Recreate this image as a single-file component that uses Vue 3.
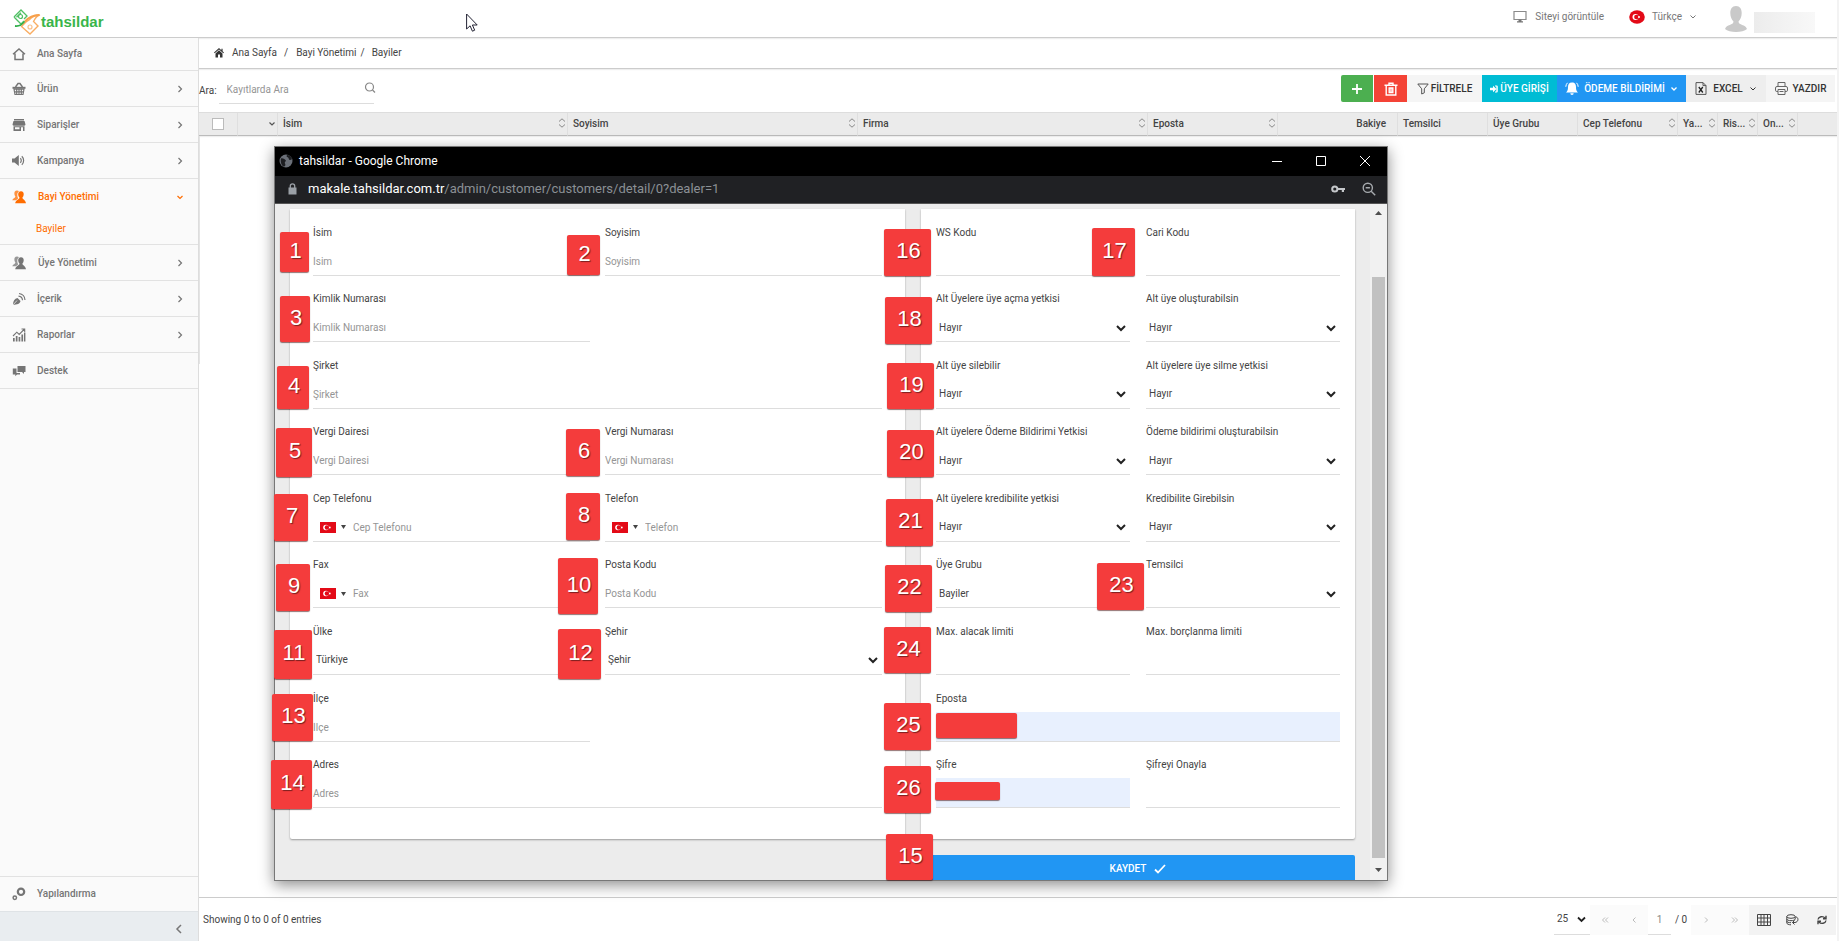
<script setup>
const menu = [
  { label: 'Ana Sayfa', icon: 'home' },
  { label: 'Ürün', icon: 'basket', arrow: true },
  { label: 'Siparişler', icon: 'store', arrow: true },
  { label: 'Kampanya', icon: 'sound', arrow: true },
  { label: 'Bayi Yönetimi', icon: 'users', arrow: true, active: true, child: 'Bayiler' },
  { label: 'Üye Yönetimi', icon: 'users', arrow: true, wide: true },
  { label: 'İçerik', icon: 'feed', arrow: true },
  { label: 'Raporlar', icon: 'chart', arrow: true },
  { label: 'Destek', icon: 'chat' }
]

const icons = {
  home: '<path d="M1 7.2 7 2l6 5.2M3 6.500v6h8v-6" fill="none" stroke="currentColor" stroke-width="1.5"/>',
  basket: '<path d="M.5 4.800h13v2H.5z"/><path d="M3.500 5 6 1.500h2L10.500 5" fill="none" stroke="currentColor" stroke-width="1.400"/><path d="M2 7.200h10l-1 5.300H3zM4.700 7v5.500M7 7v5.500M9.300 7v5.500M2.500 9.800h9" fill="none" stroke="currentColor" stroke-width="1.200"/>',
  store: '<path d="M2 1h10v1.500H2zM1.500 3h11l1 3.500a1.500 1.500 0 0 1-1.500 1.200H2A1.500 1.500 0 0 1 .5 6.500z"/><path fill-rule="evenodd" d="M1.500 8.200h11V13h-11zM3 9.200v2h4.500v-2zM9 9.200V13h2V9.200z"/>',
  sound: '<path d="M0 4.500h2.500L6.800 1v11L2.500 8.500H0z"/><path d="M8.300 4.200a3.200 3.200 0 0 1 0 4.600M9.800 2.200a6 6 0 0 1 0 8.600" fill="none" stroke="currentColor" stroke-width="1.200"/>',
  users: '<path d="M5 0.500C3 .5 2.200 2 2.400 4c.1 1.300.6 2 1 2.600C3.300 8 .8 8.300.3 10.300h4C5 9 6 8.800 6.200 8.200 5 6 4.800 2.800 7 1.200 6.500.7 5.800.5 5 .5z" opacity=".75"/><path d="M9 1.200c-2 0-2.900 1.500-2.800 3.300.1 1.500.8 2.500 1.300 3.200.1 1.700-4 2-4.300 5.600h10.800c-.3-3.600-3.700-3.900-3.600-5.600.5-.7 1.200-1.700 1.300-3.200C11.900 2.700 11 1.200 9 1.200z"/>',
  feed: '<path d="M1 13c0-4 1.500-6.500 4.500-7l3 3C8 12 5 12.500 1 13z"/><path d="M1 13l4-4.500" stroke="#fafafa" stroke-width=".7"/><path d="M6.500 4.200a4.300 4.300 0 0 1 4 4M7 1.500a7 7 0 0 1 6 6.500" fill="none" stroke="currentColor" stroke-width="1.200"/>',
  chart: '<path d="M1 10h1.700v3.500H1zM3.800 8h1.700v5.500H3.800zM6.600 9h1.700v4.500H6.600zM9.400 6.500h1.700v7H9.400zM12 4.500h1.400v9H12z"/><path d="M1 8l3.800-3.800 2.400 2.300L12.500 1M9.500 1h3.200v3" fill="none" stroke="currentColor" stroke-width="1.100"/>',
  chat: '<path d="M5.500 2h8v6h-1.500v2L10 8H5.500z"/><path d="M.8 4.500h3.700V9H8v1.500H5L3.300 12.300v-1.800H.8z"/>',
  gear: '<circle cx="9" cy="4.800" r="3.200" fill="none" stroke="currentColor" stroke-width="2.200"/><circle cx="2.800" cy="10.800" r="1.700" fill="none" stroke="currentColor" stroke-width="1.500"/>'
}

const left = [
  [{ label: 'İsim', ph: 'İsim' }, { label: 'Soyisim', ph: 'Soyisim' }],
  [{ label: 'Kimlik Numarası', ph: 'Kimlik Numarası' }],
  [{ label: 'Şirket', ph: 'Şirket', full: true }],
  [{ label: 'Vergi Dairesi', ph: 'Vergi Dairesi' }, { label: 'Vergi Numarası', ph: 'Vergi Numarası' }],
  [{ label: 'Cep Telefonu', ph: 'Cep Telefonu', flag: true }, { label: 'Telefon', ph: 'Telefon', flag: true }],
  [{ label: 'Fax', ph: 'Fax', flag: true }, { label: 'Posta Kodu', ph: 'Posta Kodu' }],
  [{ label: 'Ülke', value: 'Türkiye' }, { label: 'Şehir', value: 'Şehir' }],
  [{ label: 'İlçe', ph: 'İlçe' }],
  [{ label: 'Adres', ph: 'Adres', full: true }]
]
const right = [
  [{ label: 'WS Kodu' }, { label: 'Cari Kodu' }],
  [{ label: 'Alt Üyelere üye açma yetkisi', value: 'Hayır' }, { label: 'Alt üye oluşturabilsin', value: 'Hayır' }],
  [{ label: 'Alt üye silebilir', value: 'Hayır' }, { label: 'Alt üyelere üye silme yetkisi', value: 'Hayır' }],
  [{ label: 'Alt üyelere Ödeme Bildirimi Yetkisi', value: 'Hayır' }, { label: 'Ödeme bildirimi oluşturabilsin', value: 'Hayır' }],
  [{ label: 'Alt üyelere kredibilite yetkisi', value: 'Hayır' }, { label: 'Kredibilite Girebilsin', value: 'Hayır' }],
  [{ label: 'Üye Grubu', value: 'Bayiler' }, { label: 'Temsilci', value: ' ' }],
  [{ label: 'Max. alacak limiti' }, { label: 'Max. borçlanma limiti' }],
  [{ label: 'Eposta', full: true, filled: true }],
  [{ label: 'Şifre', filled: true }, { label: 'Şifreyi Onayla' }]
]
const cards = [
  { id: 'l', rows: left },
  { id: 'r', rows: right }
]

const columns = [
  { label: 'İsim', sort: true, cls: 'w-auto' },
  { label: 'Soyisim', sort: true, cls: 'w-auto' },
  { label: 'Firma', sort: true, cls: 'w-auto' },
  { label: 'Eposta', sort: true, cls: 'w-130' },
  { label: 'Bakiye', cls: 'w-120 end' },
  { label: 'Temsilci', cls: 'w-90' },
  { label: 'Üye Grubu', cls: 'w-90' },
  { label: 'Cep Telefonu', sort: true, cls: 'w-100' },
  { label: 'Ya...', sort: true, cls: 'w-40' },
  { label: 'Ris...', sort: true, cls: 'w-40' },
  { label: 'On...', sort: true, cls: 'w-40' }
]

// [text, x, y, width, height] on the window's canvas
const pins = [
  ['1', 6, 86, 29, 40], ['2', 293, 89, 33, 40], ['3', 6, 150, 30, 46], ['4', 3, 220, 32, 43],
  ['5', 2, 282, 36, 49], ['6', 292, 283, 34, 47], ['7', 0, 348, 34, 47], ['8', 292, 347, 34, 47],
  ['9', 2, 418, 34, 47], ['10', 284, 412, 40, 56], ['11', 0, 484, 38, 49], ['12', 284, 483, 43, 50],
  ['13', -2, 548, 41, 47], ['14', -3, 614, 41, 49], ['16', 610, 83, 47, 47], ['17', 818, 82, 43, 48],
  ['18', 611, 151, 47, 47], ['19', 613, 217, 47, 46], ['20', 613, 284, 47, 47], ['21', 612, 353, 47, 47],
  ['22', 611, 419, 47, 47], ['23', 823, 417, 47, 47], ['24', 610, 481, 47, 46], ['25', 610, 557, 47, 47],
  ['26', 610, 620, 47, 47], ['15', 612, 688, 47, 46], ['', 662, 567, 81, 25], ['', 661, 636, 65, 18]
].map(([text, x, y, w, h]) => ({
  text,
  box: { left: x + 'px', top: y + 'px', width: w + 'px', height: h + 'px' }
}))
</script>

<template>
  <div class="app">
    <header class="top">
      <a href="#" class="logo">
        <svg width="29" height="26" viewBox="0 0 29 26" fill="none">
          <path d="M2 8 9 1l6 6-3 3M2 8l7 7 3-3M4.500 8.200 9 3.700M15 7l-2.500 2.500" stroke="#4fbf63" stroke-width="1.300" />
          <circle cx="8.500" cy="7.500" r="2" stroke="#4fbf63" stroke-width="1.200" />
          <path d="M3 17c4 .5 7-1 10-4.500" stroke="#2fae49" stroke-width="1.800" />
          <path d="M9.500 17.500 14 13l3-2c3-3.500 6-5 11-5-4 1-5 4-6.500 6.500L26 17l-8 8z" stroke="#f9ad62" stroke-width="1.400" />
          <path d="M13 12.500C17 8 21 6 27 6" stroke="#f7a04b" stroke-width="2" />
          <circle cx="18" cy="18" r="2" stroke="#f9c08a" stroke-width="1.200" />
        </svg>
        <span>tahsildar</span>
      </a>
      <nav class="top-nav">
        <a href="#" class="site">
          <svg width="14" height="14" viewBox="0 0 14 14"><path d="M1 1.500h12v8H1z" fill="none" stroke="#8a8a8a" stroke-width="1.200" /><path d="M5.500 9.500h3v2h-3zM4 11.300h6v1.200H4z" fill="#777" /></svg>
          Siteyi görüntüle
        </a>
        <button type="button" class="lang">
          <svg width="16" height="14" viewBox="0 0 16 14"><ellipse cx="8" cy="7" rx="7.800" ry="6.800" fill="#e30a17" /><circle cx="6.500" cy="7" r="3" fill="#fff" /><circle cx="7.400" cy="7" r="2.300" fill="#e30a17" /><circle cx="10" cy="7" r="1" fill="#fff" /></svg>
          Türkçe
          <svg class="caret" width="8" height="8" viewBox="0 0 8 8"><path d="M1.500 2.500 4 5l2.500-2.500" fill="none" stroke="currentColor" /></svg>
        </button>
        <a href="#" class="user" aria-label="Profil">
          <svg width="22" height="26" viewBox="0 0 22 26" fill="#c9c9c9"><path d="M11 0c4 0 5.700 3 5.700 7 0 4-1.500 6.500-3.200 8.500 0 4 7 2.500 8.500 7.500-4 4-18 4-22 0 1.500-5 8.500-3.500 8.500-7.500C6.800 13.500 5.300 11 5.300 7c0-4 1.700-7 5.700-7z" /></svg>
          <span class="masked"></span>
        </a>
      </nav>
    </header>

    <div class="body">
      <aside class="side">
        <ul class="menu">
          <li v-for="m in menu" :key="m.label" :class="{ active: m.active }">
            <a href="#" class="item">
              <svg width="14" height="14" viewBox="0 0 14 14" fill="currentColor" v-html="icons[m.icon]"></svg>
              <span :class="{ shift: m.active || m.wide }">{{ m.label }}</span>
              <svg v-if="m.arrow" class="arrow" width="8" height="8" viewBox="0 0 8 8" fill="none" stroke="currentColor" stroke-width="1.200">
                <path :d="m.active ? 'M1.500 3 4 5.500 6.500 3' : 'M2.500 1 5.500 4l-3 3'" />
              </svg>
            </a>
            <a v-if="m.child" href="#" class="child">{{ m.child }}</a>
          </li>
        </ul>
        <div class="side-foot">
          <a href="#" class="item conf">
            <svg width="14" height="14" viewBox="0 0 14 14" fill="currentColor" v-html="icons.gear"></svg>
            <span>Yapılandırma</span>
          </a>
          <button type="button" class="collapse" aria-label="Menüyü daralt">
            <svg width="8" height="10" viewBox="0 0 8 10"><path d="M6 1 2 5l4 4" fill="none" stroke="#777" stroke-width="1.500" /></svg>
          </button>
        </div>
      </aside>

      <main class="main">
        <nav class="crumbs">
          <svg width="10" height="10" viewBox="0 0 10 10" fill="#333"><path d="M5 0 0 4.600l.7.700L5 1.500l4.300 3.800.7-.7L8.600 3.300V.8H7.400v1.400z" /><path d="M1.500 5.400 5 2.300l3.500 3.100V9.500H6V6.500H4v3H1.500z" /></svg>
          <a href="#">Ana Sayfa</a><i>/</i><a href="#">Bayi Yönetimi</a><i class="tight">/</i><a href="#">Bayiler</a>
        </nav>

        <div class="tools">
          <label for="search">Ara:</label>
          <div class="search">
            <input id="search" type="text" placeholder="Kayıtlarda Ara" />
            <svg width="12" height="12" viewBox="0 0 12 12" fill="none" stroke="#888" stroke-width="1.200"><circle cx="5.500" cy="5" r="4" /><path d="m8.500 8 2.500 2.500" /></svg>
          </div>
          <div class="buttons">
            <button type="button" class="b add" aria-label="Ekle"><svg width="10" height="10" viewBox="0 0 10 10"><path d="M5 0v10M0 5h10" stroke="#fff" stroke-width="1.800" /></svg></button>
            <button type="button" class="b del" aria-label="Sil"><svg width="14" height="14" viewBox="0 0 14 14" fill="none" stroke="#fff" stroke-width="1.400"><path d="M.5 3.300h13M5 3V1.200h4V3M2.200 3.500V13h9.600V3.500M5.200 6v4.500h3.600V6zM7 6v4.500" /></svg></button>
            <button type="button" class="b light filter"><svg width="12" height="12" viewBox="0 0 12 12" fill="none" stroke="#555"><path d="M.8 1h10.400L7.300 5.800v4L4.700 11V5.800z" /></svg>FİLTRELE</button>
            <button type="button" class="b login"><svg width="8" height="8" viewBox="0 0 8 8" fill="#fff"><path d="M0 2.700h3V.7L6.500 4 3 7.300v-2H0z" /><path d="M5 .5h1.500A1.200 1.200 0 0 1 7.800 1.700v4.600A1.200 1.200 0 0 1 6.500 7.500H5v-1h1.300V1.500H5z" /></svg>ÜYE GİRİŞİ</button>
            <button type="button" class="b notify"><svg width="14" height="14" viewBox="0 0 14 14" fill="#fff"><path d="M7 .5c3 0 4 2 4 4.500 0 3 .5 4 2 5.500H1C2.500 9 3 8 3 5 3 2.500 4 .5 7 .5zM5.300 11.300h3.400a1.700 1.700 0 0 1-3.400 0z" /><path d="M2.500.8A6 6 0 0 0 .8 4.800M11.500.8a6 6 0 0 1 1.700 4" fill="none" stroke="#fff" /></svg>ÖDEME BİLDİRİMİ<svg class="caret" width="8" height="8" viewBox="0 0 8 8"><path d="M1.500 2.500 4 5l2.500-2.500" fill="none" stroke="currentColor" stroke-width="1.300" /></svg></button>
            <button type="button" class="b excel"><svg width="12" height="13" viewBox="0 0 12 13" fill="none" stroke="#555"><path d="M1 .6h7l3 3v8.800H1zM8 .6v3h3" /><path d="m3.800 5 4 5.500M7.800 5l-4 5.500" stroke="#222" stroke-width="1.300" /></svg>EXCEL<svg class="caret" width="8" height="8" viewBox="0 0 8 8"><path d="M1.500 2.500 4 5l2.500-2.500" fill="none" stroke="currentColor" /></svg></button>
            <button type="button" class="b light print"><svg width="13" height="13" viewBox="0 0 13 13" fill="none" stroke="#666"><path d="M3 4.500v-4h7v4M3 9.500H1.800A1.300 1.300 0 0 1 .5 8.200V6A1.500 1.500 0 0 1 2 4.500h9A1.500 1.500 0 0 1 12.500 6v2.200a1.300 1.300 0 0 1-1.300 1.300H10M3 7.500h7v5H3zM4.500 9.500h4" /></svg>YAZDIR</button>
          </div>
        </div>

        <table class="grid">
          <thead>
            <tr>
              <th class="w-39 check"><input type="checkbox" aria-label="Tümünü seç" /></th>
              <th class="w-40 open"><svg width="8" height="8" viewBox="0 0 8 8"><path d="M1.500 2.500 4 5l2.500-2.500" fill="none" stroke="#555" stroke-width="1.200" /></svg></th>
              <th v-for="c in columns" :key="c.label" :class="c.cls">
                <div class="cell">
                  <span>{{ c.label }}</span>
                  <svg v-if="c.sort" width="8" height="10" viewBox="0 0 8 10" fill="none" stroke="#888"><path d="M1 3.500 4 .8l3 2.700M1 6.500l3 2.700 3-2.700" /></svg>
                </div>
              </th>
              <th class="w-39 last"></th>
            </tr>
          </thead>
        </table>
        <div class="rows"><div class="rail"></div></div>

        <footer class="foot">
          <span class="count">Showing 0 to 0 of 0 entries</span>
          <div class="size">
            <select aria-label="Sayfa boyutu"><option>25</option></select>
            <svg width="9" height="9" viewBox="0 0 9 9"><path d="m1 2.500 3.500 3.500L8 2.500" fill="none" stroke="#222" stroke-width="1.800" /></svg>
          </div>
          <div class="pg">
            <button type="button" aria-label="İlk"><svg width="8" height="8" viewBox="0 0 8 8"><path d="M4 1.500 1.500 4 4 6.500M7 1.500 4.500 4 7 6.500" /></svg></button>
            <button type="button" aria-label="Önceki"><svg width="8" height="8" viewBox="0 0 8 8"><path d="M5.500 1.500 3 4l2.500 2.500" /></svg></button>
          </div>
          <input class="page" type="text" value="1" aria-label="Sayfa" />
          <span class="of">/ 0</span>
          <div class="pg">
            <button type="button" aria-label="Sonraki"><svg width="8" height="8" viewBox="0 0 8 8"><path d="M3 1.500 5.500 4 3 6.500" /></svg></button>
            <button type="button" aria-label="Son"><svg width="8" height="8" viewBox="0 0 8 8"><path d="M1 1.500 3.500 4 1 6.500M4 1.500 6.500 4 4 6.500" /></svg></button>
          </div>
          <div class="pg solid">
            <button type="button" aria-label="Tablo"><svg width="14" height="12" viewBox="0 0 14 12"><path d="M.5.500h13v11H.5zM.5 4h13M.5 8h13M4 .5v11M7 .5v11M10.500.500v11" /></svg></button>
            <button type="button" aria-label="Veri"><svg width="13" height="12" viewBox="0 0 13 12"><ellipse cx="5" cy="2.500" rx="4.200" ry="1.800" /><path d="M.8 2.500v6.500c0 1 2 1.800 4.200 1.800M.8 5c0 1 2 1.700 4.200 1.700S9.200 6 9.200 5V2.500M.8 7.200c0 1 2 1.500 4.200 1.500M10 3c2.500 0 3 5-1 5.500H6.500M8.500 6.500l-2 2 2 2" /></svg></button>
            <button type="button" aria-label="Yenile"><svg width="10" height="10" viewBox="0 0 10 10" stroke-width="1.400"><path d="M1 4.500C1.500 1.500 6 .5 8 3.200M9 5.500c-.5 3-5 4-7 1.300M9 .8v2.900H6M1 9.200V6.300h3" /></svg></button>
          </div>
        </footer>
      </main>
    </div>

    <svg class="cursor" width="12" height="20" viewBox="0 0 12 20"><path d="M.6 1v15l3.500-3.200 2.300 5.400 2.300-1-2.300-5.200h4.800z" fill="#fff" stroke="#223" /></svg>

    <section class="win">
      <div class="title">
        <svg width="14" height="14" viewBox="0 0 14 14"><circle cx="7" cy="7" r="6.500" fill="#6b7078" /><path d="M2 4.500c2-.5 3 .5 4.500 1.500S5 8 6 9.500 6 13 4.500 12.500 1 8 2 4.500zM8 1c-1 1.500 0 2 1 2.500s.5 2.500 2 2.500 2-1 2-1C12.500 2.500 10.500 1 8 1z" fill="#1c1d20" /></svg>
        <span>tahsildar - Google Chrome</span>
        <div class="ctl">
          <button type="button" aria-label="Küçült"><svg width="10" height="10" viewBox="0 0 10 10"><path d="M0 5.500h10" /></svg></button>
          <button type="button" aria-label="Büyüt"><svg width="10" height="10" viewBox="0 0 10 10"><path d="M.5.500h9v9h-9z" /></svg></button>
          <button type="button" aria-label="Kapat"><svg width="10" height="10" viewBox="0 0 10 10"><path d="m0 0 10 10M10 0 0 10" /></svg></button>
        </div>
      </div>
      <div class="addr">
        <svg width="9" height="12" viewBox="0 0 9 12"><path d="M.5 4.500h8v7h-8z" fill="#9aa0a6" /><path d="M2.300 5V3a2.200 2.200 0 0 1 4.400 0v2" fill="none" stroke="#9aa0a6" stroke-width="1.300" /></svg>
        <span class="url"><b>makale.tahsildar.com.tr</b>/admin/customer/customers/detail/0?dealer=1</span>
        <svg width="14" height="8" viewBox="0 0 14 8"><circle cx="3.800" cy="4" r="2.600" fill="none" stroke="#c4c7ca" stroke-width="2" /><path d="M6.500 3H14v2h-1v2h-2.200V5H6.500z" fill="#c4c7ca" /></svg>
        <svg width="14" height="14" viewBox="0 0 14 14" fill="none" stroke="#a6aaae" stroke-width="1.400"><circle cx="5.800" cy="5.800" r="4.600" /><path d="m9.200 9.200 4 4M3.700 5.800h4.200" /></svg>
      </div>
      <div class="view">
        <div class="page-area">
          <form class="cards" @submit.prevent>
            <div v-for="card in cards" :key="card.id" class="card" :class="card.id">
              <div v-for="(row, r) in card.rows" :key="r" class="row">
                <div v-for="(f, i) in row" :key="i" class="field" :class="{ full: f.full }">
                  <label :for="card.id + r + i">{{ f.label }}</label>
                  <div class="ctrl" :class="{ filled: f.filled, phone: f.flag }">
                    <template v-if="f.value">
                      <select :id="card.id + r + i"><option>{{ f.value }}</option></select>
                      <svg class="chev" width="10" height="8" viewBox="0 0 10 8"><path d="m1 2 4 4 4-4" fill="none" stroke="#222" stroke-width="2" /></svg>
                    </template>
                    <template v-else>
                      <span v-if="f.flag" class="dial">
                        <svg width="16" height="11" viewBox="0 0 16 11"><path d="M0 0h16v11H0z" fill="#e30a17" /><circle cx="6" cy="5.500" r="2.800" fill="#fff" /><circle cx="6.900" cy="5.500" r="2.200" fill="#e30a17" /><circle cx="9.800" cy="5.500" r=".9" fill="#fff" /></svg>
                        <svg width="5" height="4" viewBox="0 0 5 4"><path d="M0 0h5L2.500 4z" fill="#444" /></svg>
                      </span>
                      <input :id="card.id + r + i" type="text" :placeholder="f.ph" />
                    </template>
                  </div>
                </div>
              </div>
            </div>
            <button type="submit" class="save">KAYDET
              <svg width="12" height="10" viewBox="0 0 12 10"><path d="m1 5.500 3 3L11 1" fill="none" stroke="#fff" stroke-width="1.800" /></svg>
            </button>
          </form>
        </div>
        <div class="scroll">
          <svg width="7" height="4" viewBox="0 0 7 4"><path d="M0 4h7L3.500 0z" fill="#505050" /></svg>
          <div class="thumb"></div>
          <svg width="7" height="4" viewBox="0 0 7 4"><path d="M0 0h7L3.500 4z" fill="#505050" /></svg>
        </div>
      </div>
      <span v-for="(p, i) in pins" :key="i" class="pin" :style="p.box">{{ p.text }}</span>
    </section>
  </div>
</template>

<style>
body { margin: 0; background: #fff; }
</style>

<style scoped>
* { box-sizing: border-box; }
.app { position: relative; min-height: 100vh; display: flex; flex-direction: column; overflow: hidden; font: 10px/14px Roboto, "Noto Sans", sans-serif; color: #444; border-right: 2px solid #f3f3f3; }
a { color: inherit; text-decoration: none; }
button, input, select { font: inherit; color: inherit; border: 0; padding: 0; margin: 0; background: none; border-radius: 0; outline: 0; }
svg { flex: none; display: block; }

.top { height: 38px; display: flex; justify-content: space-between; align-items: flex-start; border-bottom: 1px solid #ccc; box-shadow: 0 1px 1px #eee; background: #fff; }
.logo { display: flex; align-items: center; padding: 9px 0 0 12px; color: #39b54a; font: bold 15px/24px "Liberation Sans", sans-serif; }
.top-nav { display: flex; color: #777; padding-right: 22px; }
.site { display: flex; align-items: center; gap: 8px; height: 34px; margin-right: 25px; }
.lang { display: flex; align-items: center; gap: 7px; height: 34px; margin-right: 28px; }
.user { display: flex; align-items: center; gap: 7px; padding-top: 4px; }
.masked { width: 61px; height: 21px; margin-top: 6px; background: linear-gradient(90deg, #ececec, #f8f8f8); }

.body { flex: 1; display: flex; }
.side { width: 199px; flex: none; display: flex; flex-direction: column; background: #fafafa; border-right: 1px solid #ddd; color: #757575; font-weight: 500; }
.menu { list-style: none; margin: 0; padding: 0; flex: 1; }
.menu li { border-bottom: 1px solid #e2e2e2; }
.item { display: flex; align-items: center; height: 35px; padding: 0 14px 0 12px; gap: 11px; }
.menu li:first-child .item { height: 32px; }
.shift { padding-left: 1px; }
.arrow { margin-left: auto; }
.active { color: #ff6d00; }
.child { display: block; height: 30px; padding: 8px 0 0 36px; font-weight: 400; }
.conf { border-top: 1px solid #e2e2e2; }
.collapse { width: 100%; height: 30px; display: flex; justify-content: flex-end; align-items: center; padding: 4px 15px 0 0; background: #e9edf0; border-top: 1px solid #dfe3e6; }

.main { flex: 1; min-width: 0; display: flex; flex-direction: column; }
.crumbs { height: 31px; display: flex; align-items: center; padding: 0 0 1px 15px; border-bottom: 1px solid #ccc; box-shadow: 0 1px 1px #eee; }
.crumbs svg { margin-right: 8px; }
.crumbs i { font-style: normal; margin: 0 8px 0 7px; }
.crumbs .tight { margin: 0 7px 0 4px; }
.tools { height: 43px; display: flex; align-items: center; }
.search { width: 155px; height: 27px; margin-left: 2px; padding: 0 0 0 8px; display: flex; align-items: center; border-bottom: 1px solid #ddd; }
.search input { flex: 1; min-width: 0; }
.search svg { margin: 0 -2px 4px 0; }
input::placeholder { color: #959595; opacity: 1; }
.buttons { margin-left: auto; padding: 0 2px 4px 0; display: flex; }
.b { height: 27px; display: flex; align-items: center; justify-content: center; font-weight: 500; color: #333; }
.add { width: 32px; background: #4caf50; border-radius: 2px 0 0 2px; margin-right: 1px; }
.del { width: 33px; background: #f44336; }
.light { background: #f5f5f5; }
.filter { width: 75px; gap: 2px; }
.login { width: 75px; gap: 2px; background: #00bcd4; color: #fff; }
.notify { width: 129px; gap: 5px; background: #2196f3; color: #fff; }
.excel { width: 80px; gap: 6px; background: #eee; }
.print { width: 69px; gap: 5px; }

.grid { width: 100%; table-layout: fixed; border-collapse: separate; border-spacing: 0; }
th { height: 24px; padding: 0 5px; background: #ebebeb; border: solid #ddd; border-width: 1px 1px 1px 0; border-bottom-color: #bbb; font-weight: 500; text-align: left; box-shadow: 0 1px 1px #eee; }
th.last { border-right: 0; }
.cell { display: flex; align-items: center; justify-content: space-between; height: 20px; white-space: nowrap; }
.cell svg { margin: 0 -4px 2px 0; }
.w-39 { width: 39px; }
.w-40 { width: 40px; }
.w-90 { width: 90px; }
.w-100 { width: 100px; }
.w-120 { width: 120px; }
.w-130 { width: 130px; }
th.end { border-left: 0; }
.end .cell { justify-content: flex-end; padding-right: 6px; }
.check input { appearance: none; display: block; width: 12px; height: 12px; margin-left: 8px; background: #fff; border: 1px solid #bbb; }
.open svg { margin-left: auto; margin-right: -4px; }
.rows { flex: 1; }
.rail { width: 1px; height: 228px; background: #e4e4e4; }

.foot { height: 44px; display: flex; align-items: center; border-top: 1px solid #ccc; padding: 0 1px 0 4px; }
.count { flex: 1; }
.size { display: grid; width: 36px; height: 30px; align-items: center; border-bottom: 1px solid #ddd; }
.size select, .size svg { grid-area: 1 / 1; }
.size select { appearance: none; padding-left: 3px; height: 29px; }
.size svg { justify-self: end; margin-right: 4px; pointer-events: none; }
.pg { display: flex; background: #fbfbfb; height: 30px; }
.pg button { width: 29px; display: flex; align-items: center; justify-content: center; }
.pg svg { fill: none; stroke: #bbb; }
.page { width: 23px; height: 30px; text-align: center; border-bottom: 1px solid #ddd; color: #888; }
.of { width: 20px; padding-left: 4px; }
.solid { background: #f3f3f3; }
.solid svg { stroke: #444; }

.cursor { position: absolute; left: 466px; top: 13px; }

.win { position: absolute; left: 274px; top: 146px; width: 1114px; height: 735px; display: flex; flex-direction: column; border: 1px solid #777; box-shadow: 0 4px 14px rgba(0, 0, 0, .45); background: #ececec; }
.title { height: 29px; display: flex; align-items: center; gap: 6px; padding: 0 0 1px 4px; background: #000; color: #fff; font: 12px/16px Roboto, "Noto Sans", sans-serif; }
.ctl { margin-left: auto; display: flex; }
.ctl button { width: 44px; height: 28px; display: flex; align-items: center; justify-content: center; }
.ctl svg { fill: none; stroke: #fff; }
.addr { height: 28px; display: flex; align-items: center; padding: 0 11px 1px 13px; background: #202124; border-bottom: 1px solid #555; color: #8b9095; font: 13px/18px Roboto, "Noto Sans", sans-serif; }
.addr .url { flex: 1; margin-left: 11px; }
.addr b { font-weight: 400; color: #fff; }
.addr svg:last-child { margin-left: 17px; }
.view { flex: 1; min-height: 0; display: flex; overflow: hidden; }
.page-area { flex: 1; min-width: 0; padding: 5px 15px 0; overflow: hidden; }
.cards { display: grid; grid-template-columns: 615fr 434fr; column-gap: 16px; row-gap: 16px; }
.card { height: 630px; display: flex; flex-direction: column; background: #fff; border-radius: 0 0 2px 2px; box-shadow: 0 1px 2px rgba(0, 0, 0, .35); padding: 0 15px 31px; }
.card.l { padding: 0 23px 31px; }
.row { flex: 1; min-height: 0; display: grid; grid-template-columns: 1fr 1fr; column-gap: 15px; align-items: end; }
.r .row { column-gap: 16px; }
.field { min-width: 0; }
.field.full { grid-column: 1 / 3; }
.field label { display: block; margin-bottom: 6px; white-space: nowrap; }
.ctrl { height: 30px; display: grid; align-items: center; border-bottom: 1px solid #ddd; }
.ctrl input, .ctrl select { width: 100%; min-width: 0; height: 29px; padding-top: 2px; line-height: 20px; }
.ctrl select { appearance: none; padding-left: 3px; grid-area: 1 / 1; }
.chev { grid-area: 1 / 1; justify-self: end; margin: 2px 4px 0 0; pointer-events: none; }
.ctrl.filled { background: #e8f0fe; }
.ctrl.phone { display: flex; }
.dial { display: flex; align-items: center; gap: 5px; padding: 2px 7px 0 7px; }
.save { grid-column: 2; height: 36px; display: flex; justify-content: center; align-items: flex-start; gap: 8px; padding-top: 7px; background: #2196f3; color: #fff; font-weight: 500; border-radius: 2px; }
.save svg { margin-top: 2px; }
.scroll { width: 17px; display: flex; flex-direction: column; align-items: center; background: #f1f1f1; padding: 7px 0 8px; }
.thumb { flex: 1; width: 13px; margin: 62px 0 10px; background: #c1c1c1; }
.pin { position: absolute; margin: -1px 0 0 -1px; padding: 0 0 3px 2px; display: flex; align-items: center; justify-content: center; background: #f43c3c; color: #fff; border-radius: 2px; box-shadow: 0 1px 1px rgba(60, 0, 0, .55); font: 22px/24px "Liberation Sans", sans-serif; text-shadow: 1px 1px 1px rgba(0, 0, 0, .5); }
</style>
